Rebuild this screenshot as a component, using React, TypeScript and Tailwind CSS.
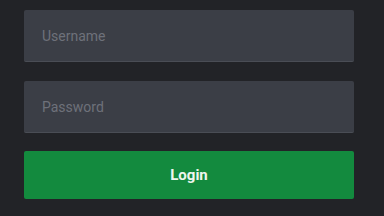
export default function App() {
  return (
    <div className="min-h-screen w-full bg-[#222327] pt-[10px] pl-6" style={{ fontFamily: 'Roboto, "Liberation Sans", sans-serif' }}>
      <form className="flex w-[330px] flex-col" onSubmit={(e) => e.preventDefault()}>
        <input
          type="text"
          placeholder="Username"
          className="h-[52px] w-full rounded-[2px] border-b border-[#4a4d55] bg-[#3b3e46] px-[18px] text-[14px] text-gray-200 placeholder-[#6e717a] outline-none"
        />
        <input
          type="password"
          placeholder="Password"
          className="mt-[19px] h-[52px] w-full rounded-[2px] border-b border-[#4a4d55] bg-[#3b3e46] px-[18px] text-[14px] text-gray-200 placeholder-[#6e717a] outline-none"
        />
        <button
          type="submit"
          className="mt-[18px] h-[48px] w-full rounded-[2px] bg-[#138a3e] text-[15px] font-bold text-[#eef6ef]"
        >
          Login
        </button>
      </form>
    </div>
  );
}
